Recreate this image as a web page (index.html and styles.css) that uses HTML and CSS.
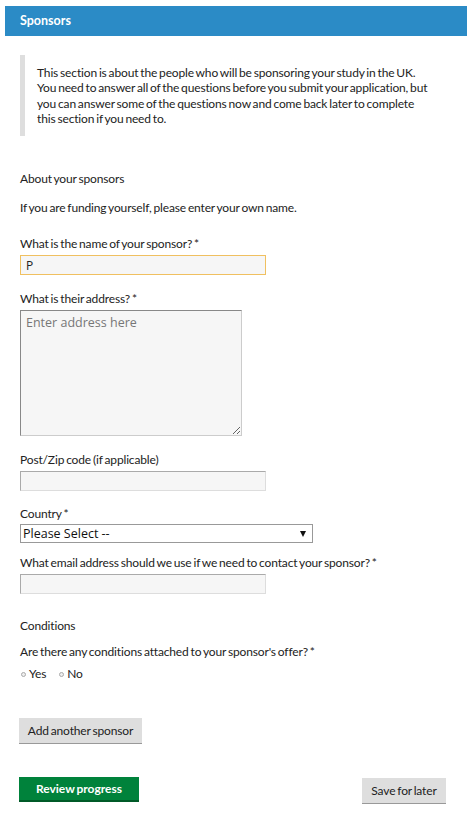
FILE: index.html
```html
<!DOCTYPE html>
<html>
<head>
<meta charset="utf-8">
<link rel="stylesheet" href="styles.css">
</head>
<body>
<div class="header">Sponsors</div>
<div class="content">
  <div class="note">
    This section is about the people who will be sponsoring your study in the UK. You need to answer all of the questions before you submit your application, but you can answer some of the questions now and come back later to complete this section if you need to.
  </div>

  <p class="heading">About your sponsors</p>
  <p class="hint">If you are funding yourself, please enter your own name.</p>

  <div class="group">
    <label class="label">What is the name of your sponsor? *</label>
    <input class="input focused" type="text" value="P">
  </div>

  <div class="group">
    <label class="label">What is their address? *</label>
    <textarea class="textarea" placeholder="Enter address here"></textarea>
  </div>

  <div class="group">
    <label class="label">Post/Zip code (if applicable)</label>
    <input class="input" type="text">
  </div>

  <div class="group country">
    <label class="label">Country *</label>
    <div class="select-wrap">
      <select class="select"><option>Please Select --</option></select>
      <span class="arrow"></span>
    </div>
  </div>

  <div class="group after-select">
    <label class="label">What email address should we use if we need to contact your sponsor? *</label>
    <input class="input" type="text">
  </div>

  <p class="heading conditions">Conditions</p>
  <p class="question">Are there any conditions attached to your sponsor's offer? *</p>
  <div class="radios">
    <span class="radio"><span class="dot"></span>Yes</span>
    <span class="radio"><span class="dot"></span>No</span>
  </div>

  <button class="btn add">Add another sponsor</button>

  <div class="actions">
    <button class="btn primary">Review progress</button>
    <button class="btn save">Save for later</button>
  </div>
</div>
</body>
</html>
```
FILE: styles.css
```css
* { box-sizing: border-box; }
body {
  margin: 0;
  background: #fff;
  font-family: Lato, "Liberation Sans", sans-serif;
  font-size: 12px;
  letter-spacing: -0.15px;
  word-spacing: -1px;
  color: #222;
}
.header {
  margin: 6px 6px 0 5px;
  height: 30px;
  background: #2b8bc6;
  color: #fff;
  font-weight: 700;
  font-size: 12.5px;
  line-height: 30px;
  padding-left: 15px;
  letter-spacing: 0;
}
.content {
  padding: 0 20px;
}
.note {
  margin-top: 19px;
  border-left: 5px solid #dedede;
  padding: 10px 20px 10px 12px;
  line-height: 15.3px;
  width: 433px;
}
.heading, .hint, .question {
  margin: 0;
  line-height: 16px;
}
.heading { margin-top: 35px; }
.hint { margin-top: 13px; }
.group { margin-top: 16px; }
.hint + .group { margin-top: 20px; }
.group.country { margin-top: 15px; }
.group.after-select { margin-top: 12px; }
.label {
  display: block;
  line-height: 16px;
  margin-bottom: 3px;
}
.country .label { margin-bottom: 2px; }
.input {
  display: block;
  width: 246px;
  height: 20px;
  border: 1px solid #aaa;
  border-bottom-color: #ddd;
  border-right-color: #ddd;
  background: #f6f6f6;
  font-family: "Open Sans", "Noto Sans", sans-serif;
  font-size: 12px;
  letter-spacing: 0;
  word-spacing: 0;
  padding: 0 5px;
  margin: 0;
  outline: none;
}
.input.focused {
  border: 1px solid #f0c060;
  color: #222;
}
.textarea {
  display: block;
  width: 222px;
  height: 126px;
  border: 1px solid #888;
  border-right-color: #ccc;
  border-bottom-color: #ccc;
  background: #f6f6f6;
  margin: 0;
  padding: 3px 5px;
  font-family: "Open Sans", "Noto Sans", sans-serif;
  font-size: 12.5px;
  letter-spacing: 0;
  word-spacing: 0;
  resize: both;
}
.textarea::placeholder { color: #777; }
.select-wrap {
  position: relative;
  width: 293px;
  height: 19px;
}
.select {
  appearance: none;
  -webkit-appearance: none;
  display: block;
  width: 293px;
  height: 19px;
  border: 1px solid #999;
  border-radius: 0;
  background: #fff;
  font-family: "Open Sans", "Noto Sans", sans-serif;
  font-size: 12.5px;
  letter-spacing: 0;
  word-spacing: 0;
  color: #111;
  padding: 0 2px;
  margin: 0;
  line-height: 17px;
}
.arrow {
  position: absolute;
  right: 7px;
  top: 7px;
  width: 0;
  height: 0;
  border-left: 3.5px solid transparent;
  border-right: 3.5px solid transparent;
  border-top: 6px solid #111;
}
.conditions { margin-top: 24px; }
.question { margin-top: 10px; }
.radios {
  display: flex;
  gap: 12px;
  margin-top: 6px;
  line-height: 16px;
}
.radio {
  display: inline-flex;
  align-items: center;
}
.dot {
  display: inline-block;
  width: 5px;
  height: 5px;
  border: 1px solid #aaa;
  border-radius: 50%;
  background: #eee;
  margin: 0 3px 0 1px;
}
.btn {
  font-family: Lato, "Liberation Sans", sans-serif;
  font-size: 12px;
  letter-spacing: -0.15px;
  word-spacing: -1px;
  border: none;
  border-radius: 0;
  cursor: pointer;
  padding: 0;
}
.add {
  display: block;
  margin: 36px 0 0 -1px;
  width: 123px;
  height: 26px;
  background: #dedede;
  border-bottom: 1px solid #999;
  color: #222;
}
.actions {
  display: flex;
  justify-content: space-between;
  align-items: flex-start;
  margin-top: 33px;
  margin-left: -1px;
  width: 427px;
}
.primary {
  width: 120px;
  height: 25px;
  background: #00823b;
  border-bottom: 2px solid #005a28;
  color: #fff;
  font-weight: 700;
  letter-spacing: 0;
}
.save {
  margin-top: 1px;
  width: 84px;
  height: 26px;
  background: #dedede;
  border-bottom: 1px solid #999;
  color: #222;
}
```
